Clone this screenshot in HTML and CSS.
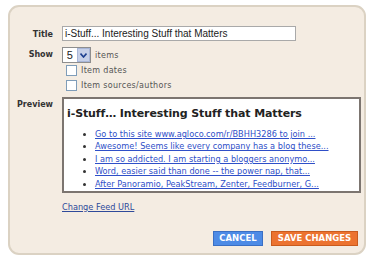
FILE: index.html
```html
<!DOCTYPE html>
<html lang="en">
<head>
    <meta charset="UTF-8">
    <title>Configure Feed</title>
    <link rel="stylesheet" href="styles.css">
</head>
<body>
    <div class="panel">
        <div class="row row-title">
            <label class="label">Title</label>
            <input class="title-input" type="text" value="i-Stuff... Interesting Stuff that Matters">
        </div>
        <div class="row row-show">
            <label class="label">Show</label>
            <div class="show-opts">
                <div class="count-line">
                    <span class="select"><span class="select-value">5</span><span class="select-btn">
                        <svg width="7" height="5" viewBox="0 0 7 5"><path d="M0.5 0.5 L3.5 4 L6.5 0.5" fill="none" stroke="#1c3f8f" stroke-width="1.6"/></svg>
                    </span></span>
                    <span class="opt-text">items</span>
                </div>
                <div class="check-line"><span class="check"></span><span class="opt-text">Item dates</span></div>
                <div class="check-line"><span class="check"></span><span class="opt-text">Item sources/authors</span></div>
            </div>
        </div>
        <div class="row row-preview">
            <label class="label">Preview</label>
            <div class="preview-col">
                <div class="preview">
                    <h2>i-Stuff… Interesting Stuff that Matters</h2>
                    <ul>
                        <li><a href="#">Go to this site www.agloco.com/r/BBHH3286 to join ...</a></li>
                        <li><a href="#">Awesome! Seems like every company has a blog these...</a></li>
                        <li><a href="#">I am so addicted. I am starting a bloggers anonymo...</a></li>
                        <li><a href="#">Word, easier said than done -- the power nap, that...</a></li>
                        <li><a href="#">After Panoramio, PeakStream, Zenter, Feedburner, G...</a></li>
                    </ul>
                </div>
                <a class="change-link" href="#">Change Feed URL</a>
            </div>
        </div>
        <div class="actions">
            <button class="btn btn-cancel">CANCEL</button>
            <button class="btn btn-save">SAVE CHANGES</button>
        </div>
    </div>
</body>
</html>
```

FILE: styles.css
```css
body {
    margin: 0;
    padding: 5px 0 0 8px;
    background: #fff;
    font-family: 'DejaVu Sans', Verdana, sans-serif;
    font-size: 9px;
    color: #333;
}
.panel {
    width: 358px;
    height: 250px;
    box-sizing: border-box;
    background: #f4ece2;
    border: 2px solid #dbd2c3;
    border-radius: 11px;
    padding: 19px 0 0 0;
}
.row {
    display: flex;
    align-items: flex-start;
}
.label {
    width: 43px;
    text-align: right;
    font-weight: bold;
    font-size: 8px;
    color: #333;
    margin-right: 9px;
}
.row-title .label {
    padding-top: 4px;
}
.title-input {
    width: 234px;
    height: 15px;
    box-sizing: border-box;
    border: 1px solid #a9a9a9;
    background: #fff;
    font-family: 'Liberation Sans', Arial, sans-serif;
    font-size: 10px;
    padding: 0 2px;
    margin: 0;
    color: #222;
    outline: none;
}
.row-show {
    margin-top: 6px;
}
.row-show .label {
    padding-top: 3px;
}
.count-line {
    display: flex;
    align-items: center;
    height: 16px;
}
.select {
    display: flex;
    align-items: center;
    width: 29px;
    height: 16px;
    box-sizing: border-box;
    border: 1px solid #8e8e8e;
    background: #fff;
}
.select-value {
    width: 14px;
    text-align: center;
    font-family: 'Liberation Sans', Arial, sans-serif;
    font-size: 11px;
    color: #222;
}
.select-btn {
    width: 11px;
    height: 12px;
    margin-left: 1px;
    background: #c6d0e8;
    border: 1px solid #a8b6d8;
    display: flex;
    align-items: center;
    justify-content: center;
}
.opt-text {
    font-size: 8px;
    color: #555;
    letter-spacing: 0.3px;
    margin-left: 4px;
}
.check-line {
    display: flex;
    align-items: center;
    margin-left: 4px;
    height: 15px;
}
.check {
    width: 9px;
    height: 9px;
    border: 1px solid #7f9db9;
    background: #fff;
}
.row-preview {
    margin-top: 4px;
}
.row-preview .label {
    padding-top: 3px;
}
.preview {
    width: 299px;
    height: 96px;
    box-sizing: border-box;
    background: #fff;
    border: 2px solid #7c7570;
    padding: 8px 0 0 3px;
}
.preview h2 {
    margin: 0;
    font-family: 'DejaVu Sans', Tahoma, sans-serif;
    font-size: 11px;
    font-weight: bold;
    color: #222;
    letter-spacing: -0.1px;
}
.preview ul {
    margin: 8px 0 0 0;
    padding: 0 0 0 28px;
    list-style: disc;
}
.preview li {
    font-size: 8.2px;
    line-height: 12.4px;
    color: #333;
}
.preview a {
    color: #2f4fc8;
}
.change-link {
    display: inline-block;
    margin-top: 9px;
    font-size: 8.2px;
    color: #2f4a9a;
}
.actions {
    display: flex;
    justify-content: flex-end;
    gap: 8px;
    margin-top: 19px;
    padding-right: 6px;
}
.btn {
    height: 15px;
    border: 1px solid #ccc;
    color: #fff;
    font-family: 'DejaVu Sans', Verdana, sans-serif;
    font-weight: bold;
    font-size: 8.5px;
    padding: 0 4px;
    line-height: 13px;
}
.btn-cancel {
    width: 50px;
    background: #4d8be6;
    border-color: #3a6fc4;
}
.btn-save {
    width: 87px;
    background: #ec7330;
    border-color: #c95b1e;
}
```
